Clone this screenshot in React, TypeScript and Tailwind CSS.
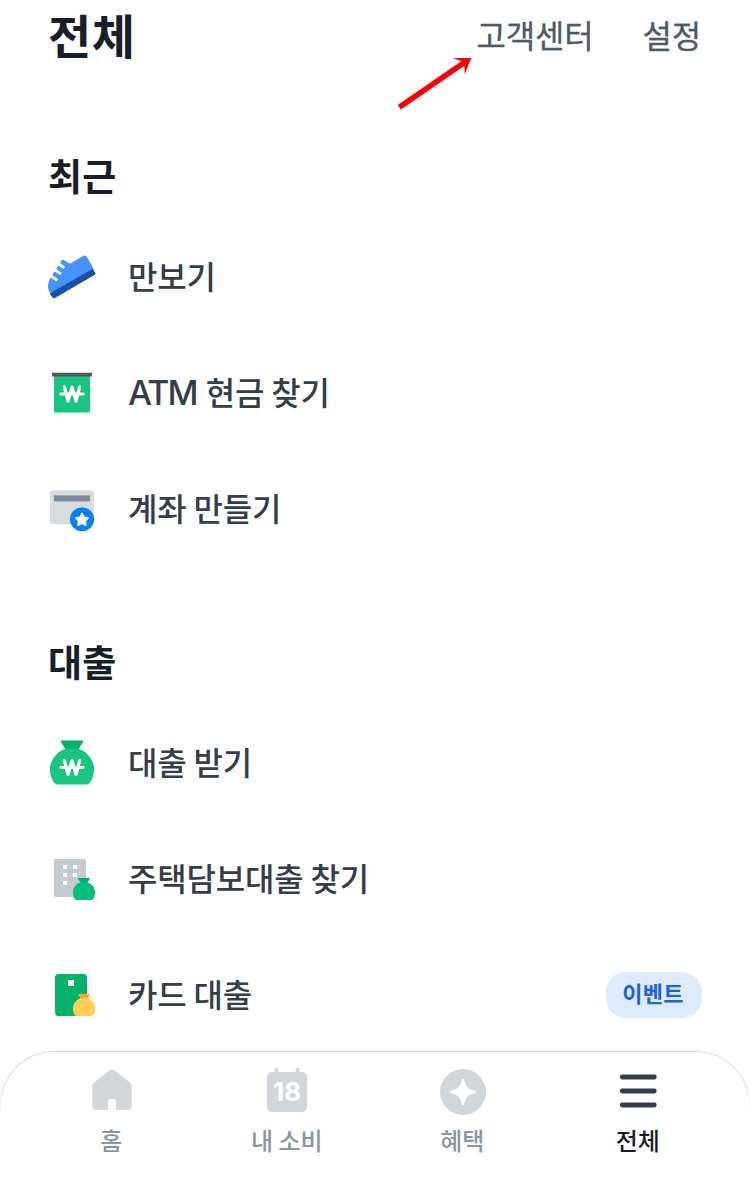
import type { ReactNode } from "react";

function WonMark({ y }: { y: number }) {
  return (
    <g transform={`translate(0 ${y})`} fill="none" stroke="#fff" strokeWidth="3.2" strokeLinecap="round" strokeLinejoin="round">
      <path d="M12.8 0H35.2" strokeWidth="2.8" />
      <path d="M16.4 -7L20 7L24 -6.6L28 7L31.6 -7" />
    </g>
  );
}

function Icon({ children }: { children: ReactNode }) {
  return (
    <svg className="size-12 shrink-0" viewBox="0 0 48 48" fill="none" aria-hidden="true">
      {children}
    </svg>
  );
}

function ShoeIcon() {
  return (
    <Icon>
      <path d="M2.3 40.4C.8 38 0 35.8 0 33.2C0 27.6 4 22.6 7.1 17.7L13.5 7.6Q14.4 6.3 15.8 7L22 10.8L35.4 2.8Q37.5 1.8 38.6 3.6L45.3 15.2L3 41Z" fill="#4593fc" />
      <path d="M44.7 15.6L47.3 20Q47.8 21 46.8 21.7L7 44.9Q5.3 45.8 4.1 44.2L1.8 40.6Z" fill="#1b4fac" />
      <path d="M10.4 10.8L16.4 14.9M6.4 16.6L13 20.9M2.8 22.9L9.3 27.4" stroke="#fff" strokeWidth="2.9" />
    </Icon>
  );
}

function AtmIcon() {
  return (
    <Icon>
      <path d="M6 7H42V42.6Q42 43.6 41 43.6H7Q6 43.6 6 42.6Z" fill="#19c580" />
      <path d="M4 3.7H44V7.5H4Z" fill="#4e5968" />
      <WonMark y={25} />
    </Icon>
  );
}

function AccountIcon() {
  return (
    <Icon>
      <rect x="2" y="5.2" width="44" height="34" rx="3" fill="#d8dcdf" />
      <rect x="6" y="10.4" width="36" height="6" fill="#7c8998" />
      <circle cx="34" cy="34.3" r="12" fill="#0580fa" />
      <path d="M34 28.4L36 32.3L40.3 33L37.2 36L37.9 40.2L34 38.2L30.1 40.2L30.8 36L27.7 33L32 32.3Z" fill="#fff" stroke="#fff" strokeWidth="1.6" strokeLinejoin="round" />
    </Icon>
  );
}

function LoanIcon() {
  return (
    <Icon>
      <path d="M13.6 1.5H34.6Q35.8 1.5 35.1 2.7L30.5 10.5H17.5L13 2.7Q12.4 1.5 13.6 1.5Z" fill="#04b26c" />
      <path d="M18 9.8H30C39 12.5 46 20.5 46 30.5C46 36 44 41.2 41.6 44Q39.8 45.6 37.5 45.6H10.5Q8.2 45.6 6.4 44C4 41.2 2 36 2 30.5C2 20.5 9 12.5 18 9.8Z" fill="#19c580" />
      <WonMark y={28.5} />
    </Icon>
  );
}

function SmallBag({ neck, body }: { neck: string; body: string }) {
  return (
    <>
      <path d="M30.6 23H41.5Q42.3 23 41.8 23.8L39.2 28H32.8L30.2 23.8Q29.8 23 30.6 23Z" fill={neck} />
      <path d="M33 27.3H39C43.8 28.6 47 32.5 47 37.4C47 40.2 46.3 42.6 45 44.2Q44.2 45 43 45H29Q27.8 45 27 44.2C25.7 42.6 25 40.2 25 37.4C25 32.5 28.2 28.6 33 27.3Z" fill={body} />
    </>
  );
}

function HouseLoanIcon() {
  return (
    <Icon>
      <rect x="6" y="4" width="32" height="38" rx="1.2" fill="#c5c9d1" />
      <path d="M15 10h4v4h-4zM25 10h4v4h-4zM15 18h4v4h-4zM25 18h4v4h-4zM15 26h4v4h-4z" fill="#fff" />
      <SmallBag neck="#04aa67" body="#02c079" />
    </Icon>
  );
}

function CardLoanIcon() {
  return (
    <Icon>
      <rect x="7" y="3" width="32" height="42" rx="3.5" fill="#04b26c" />
      <path d="M20 9h6v6h-6z" fill="#fff" />
      <SmallBag neck="#ffa927" body="#ffcd59" />
    </Icon>
  );
}

function Heading({ children }: { children: ReactNode }) {
  return (
    <h2 className="flex h-[83px] items-center pb-1.5 text-[37px] leading-[52px] font-bold tracking-[0.1px] text-[#191f28]">{children}</h2>
  );
}

function Row({ icon, label, badge }: { icon: ReactNode; label: ReactNode; badge?: string }) {
  return (
    <li className="flex h-[116px] items-center gap-8">
      {icon}
      <span className="flex-1 pb-1 text-[32px] leading-[46px] font-medium tracking-[-0.2px] whitespace-nowrap text-[#333d4b]">{label}</span>
      {badge && (
        <span className="flex h-[46px] w-24 items-center justify-center rounded-[20px] bg-[#deebfc] pr-0.5 pb-1.5 text-[22px] leading-8 font-bold tracking-[0.3px] text-[#1b64da]">
          {badge}
        </span>
      )}
    </li>
  );
}

function Tab({ icon, label, active = false }: { icon: ReactNode; label: string; active?: boolean }) {
  return (
    <button className="flex flex-1 flex-col items-center pt-4">
      {icon}
      <span className={`mt-[7px] mr-px text-[24px] leading-9 font-medium ${active ? "text-[#191f28]" : "text-[#8b95a1]"}`}>{label}</span>
    </button>
  );
}

export default function App() {
  return (
    <div className="relative flex h-[1191px] w-[750px] flex-col overflow-hidden bg-white font-['Noto_Sans_CJK_KR',sans-serif]">
      <header className="flex h-[72px] shrink-0 items-center justify-between px-12 pb-1">
        <h1 className="text-[47px] leading-[68px] font-bold tracking-[0.6px] text-[#191f28]">전체</h1>
        <nav className="flex gap-[49px] pr-px text-[32px] leading-[46px] tracking-[-0.2px] text-[#4e5968] [-webkit-text-stroke:0.3px_#4e5968]">
          <a>고객센터</a>
          <a>설정</a>
        </nav>
      </header>

      <svg className="absolute top-[50px] left-[390px] h-[64px] w-[90px]" viewBox="390 50 90 64" aria-hidden="true">
        <path d="M397.7 105L461.3 61.2L453 58H471.4L464.6 74.5L464.5 65.7L400.9 109.6Z" fill="#fb0007" />
      </svg>

      <main className="flex h-[979px] shrink-0 flex-col gap-[55px] overflow-hidden px-12 pt-16">
        <section>
          <Heading>최근</Heading>
          <ul>
            <Row icon={<ShoeIcon />} label="만보기" />
            <Row icon={<AtmIcon />} label={<><span className="mr-0.5 font-['Inter'] text-[34px] leading-none tracking-[-1.9px]">ATM</span> 현금 찾기</>} />
            <Row icon={<AccountIcon />} label="계좌 만들기" />
          </ul>
        </section>
        <section>
          <Heading>대출</Heading>
          <ul>
            <Row icon={<LoanIcon />} label="대출 받기" />
            <Row icon={<HouseLoanIcon />} label="주택담보대출 찾기" />
            <Row icon={<CardLoanIcon />} label="카드 대출" badge="이벤트" />
          </ul>
        </section>
      </main>

      <nav className="relative flex h-[140px] shrink-0 px-6">
        <div className="pointer-events-none absolute inset-x-0 top-0 h-[62px] rounded-t-[54px] border border-b-0 border-[#d1d6db] mask-b-from-60% mask-b-to-100%" />
        <Tab
          label="홈"
          icon={
            <Icon>
              <path d="M21.8 3.2Q24 1.5 26.2 3.2L42 15.4Q43.7 17 43.7 19.4V38.5Q43.7 43 39.5 43H28V34Q28 32 26 32H22Q20 32 20 34V43H8.5Q4.3 43 4.3 38.5V19.4Q4.3 17 6 15.4Z" fill="#d1d6db" />
            </Icon>
          }
        />
        <Tab
          label="내 소비"
          icon={
            <Icon>
              <path d="M11.3 2.7a2 2 0 0 1 4 0V7h-4zM32.7 2.7a2 2 0 0 1 4 0V7h-4z" fill="#d1d6db" />
              <rect x="3.9" y="5" width="40.2" height="40" rx="5" fill="#d1d6db" />
              <text x="24" y="34.3" textAnchor="middle" className="fill-white font-['Inter'] text-[26px] font-bold">18</text>
            </Icon>
          }
        />
        <Tab
          label="혜택"
          icon={
            <Icon>
              <circle cx="24" cy="25" r="23" fill="#d1d6db" />
              <path d="M23 12.6Q24 11 25 12.6C27.2 20.5 28.5 21.8 36.4 24Q38 25 36.4 26C28.5 28.2 27.2 29.5 25 37.4Q24 39 23 37.4C20.8 29.5 19.5 28.2 11.6 26Q10 25 11.6 24C19.5 21.8 20.8 20.5 23 12.6Z" fill="#fff" />
            </Icon>
          }
        />
        <Tab
          active
          label="전체"
          icon={
            <Icon>
              <path d="M8.3 10H40.3M8.3 24H40.3M8.3 38H40.3" stroke="#333d4b" strokeWidth="4.8" strokeLinecap="round" />
            </Icon>
          }
        />
      </nav>
    </div>
  );
}
